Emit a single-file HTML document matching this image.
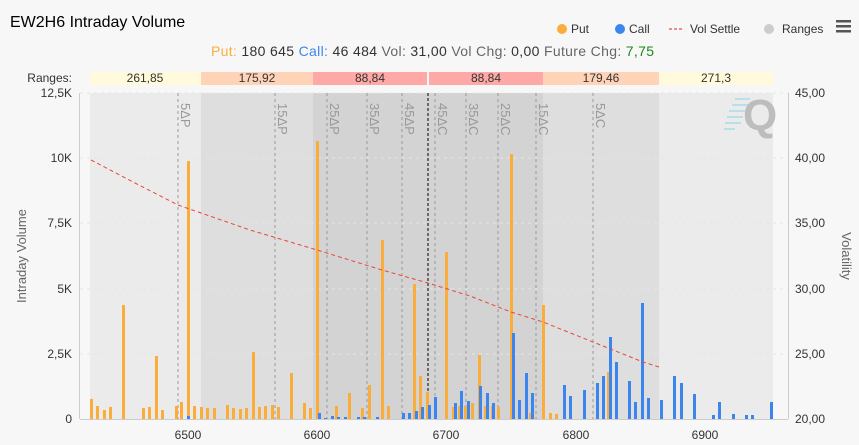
<!DOCTYPE html>
<html><head><meta charset="utf-8"><style>
body{margin:0;background:#f7f7f7;}
svg{display:block;font-family:"Liberation Sans",sans-serif;}
</style></head><body>
<svg width="859" height="445" xmlns="http://www.w3.org/2000/svg">
<rect width="859" height="445" fill="#f7f7f7"/>
<text x="10" y="27" font-size="16" fill="#000">EW2H6 Intraday Volume</text>
<g font-size="12" fill="#333">
<circle cx="562" cy="29" r="5" fill="#fbad3c"/><text x="571" y="33">Put</text>
<circle cx="620" cy="29" r="5" fill="#3d85ee"/><text x="629" y="33">Call</text>
<line x1="669" y1="29" x2="684" y2="29" stroke="#ef8a8a" stroke-width="2" stroke-dasharray="3,2"/><text x="690" y="33" textLength="50">Vol Settle</text>
<circle cx="769" cy="29" r="5" fill="#ccc"/><text x="782" y="33">Ranges</text>
</g>
<g fill="#555"><rect x="836" y="20" width="15" height="2.5"/><rect x="836" y="25" width="15" height="2.5"/><rect x="836" y="30" width="15" height="2.5"/></g>
<text x="211" y="56" font-size="14" fill="#fbad3c" textLength="443" lengthAdjust="spacing">Put: <tspan fill="#333">180 645</tspan> <tspan fill="#3d85ee">Call:</tspan> <tspan fill="#333">46 484</tspan> <tspan fill="#666">Vol:</tspan> <tspan fill="#333">31,00</tspan> <tspan fill="#666">Vol Chg:</tspan> <tspan fill="#333">0,00</tspan> <tspan fill="#666">Future Chg:</tspan> <tspan fill="#1a8a1a">7,75</tspan></text>
<text x="72" y="82" font-size="12" fill="#333" text-anchor="end">Ranges:</text>
<g font-size="12" fill="#333" text-anchor="middle">
<rect x="90" y="72" width="111" height="13" fill="#fffadb"/><text x="145" y="82">261,85</text>
<rect x="201" y="72" width="112" height="13" fill="#ffd3b8"/><text x="257" y="82">175,92</text>
<rect x="313" y="72" width="114" height="13" fill="#ffa8a8"/><text x="370" y="82">88,84</text>
<rect x="429" y="72" width="114" height="13" fill="#ffa8a8"/><text x="486" y="82">88,84</text>
<rect x="543" y="72" width="116" height="13" fill="#ffd3b8"/><text x="601" y="82">179,46</text>
<rect x="659" y="72" width="114" height="13" fill="#fffadb"/><text x="716" y="82">271,3</text>
</g>
<rect x="90" y="93" width="111" height="326" fill="#ebebeb"/>
<rect x="201" y="93" width="112" height="326" fill="#dedede"/>
<rect x="313" y="93" width="230" height="326" fill="#d3d3d3"/>
<rect x="543" y="93" width="116" height="326" fill="#dedede"/>
<rect x="659" y="93" width="114" height="326" fill="#ebebeb"/>
<g stroke="#a8dcea" stroke-width="1.5"><line x1="735" y1="99" x2="750" y2="99"/><line x1="732" y1="105" x2="748" y2="105"/><line x1="729" y1="111" x2="745" y2="111"/><line x1="727" y1="117" x2="743" y2="117"/><line x1="725" y1="123" x2="741" y2="123"/><line x1="724" y1="129" x2="735" y2="129"/></g>
<text x="743" y="130" font-size="44" font-weight="bold" fill="#bdbdbd">Q</text>
<g stroke="#e4e4e4" stroke-dasharray="3,4" stroke-width="1">
<line x1="80" y1="93" x2="788" y2="93"/><line x1="80" y1="158" x2="788" y2="158"/><line x1="80" y1="223" x2="788" y2="223"/><line x1="80" y1="289" x2="788" y2="289"/><line x1="80" y1="354" x2="788" y2="354"/>
</g>
<line x1="79.5" y1="93" x2="79.5" y2="419" stroke="#ccc"/>
<line x1="788.5" y1="93" x2="788.5" y2="419" stroke="#ccc"/>
<line x1="80" y1="419.5" x2="788" y2="419.5" stroke="#ccc"/>
<g font-size="12" fill="#333" text-anchor="end">
<text x="72" y="97">12,5K</text><text x="72" y="162">10K</text><text x="72" y="227">7,5K</text><text x="72" y="293">5K</text><text x="72" y="358">2,5K</text><text x="72" y="423">0</text>
</g>
<g font-size="12" fill="#333">
<text x="795" y="97">45,00</text><text x="795" y="162">40,00</text><text x="795" y="227">35,00</text><text x="795" y="293">30,00</text><text x="795" y="358">25,00</text><text x="795" y="423">20,00</text>
</g>
<g font-size="12" fill="#333" text-anchor="middle">
<text x="188" y="439">6500</text><text x="317" y="439">6600</text><text x="446" y="439">6700</text><text x="576" y="439">6800</text><text x="705" y="439">6900</text>
</g>
<text transform="translate(26,256) rotate(-90)" font-size="13" fill="#666" text-anchor="middle">Intraday Volume</text>
<text transform="translate(842,256) rotate(90)" font-size="13" fill="#666" text-anchor="middle">Volatility</text>
<g stroke="#999" stroke-dasharray="3,3">
<line x1="178" y1="93" x2="178" y2="419"/><line x1="275" y1="93" x2="275" y2="419"/><line x1="327" y1="93" x2="327" y2="419"/><line x1="367" y1="93" x2="367" y2="419"/><line x1="402" y1="93" x2="402" y2="419"/><line x1="435" y1="93" x2="435" y2="419"/><line x1="466" y1="93" x2="466" y2="419"/><line x1="498" y1="93" x2="498" y2="419"/><line x1="536" y1="93" x2="536" y2="419"/><line x1="593" y1="93" x2="593" y2="419"/>
</g>
<line x1="428" y1="93" x2="428" y2="419" stroke="#333" stroke-dasharray="3,2" stroke-width="1.3"/>
<g font-size="13" fill="#999">
<text transform="translate(181,103) rotate(90)">5ΔP</text>
<text transform="translate(278,103) rotate(90)">15ΔP</text>
<text transform="translate(330,103) rotate(90)">25ΔP</text>
<text transform="translate(370,103) rotate(90)">35ΔP</text>
<text transform="translate(405,103) rotate(90)">45ΔP</text>
<text transform="translate(438,103) rotate(90)">45ΔC</text>
<text transform="translate(469,103) rotate(90)">35ΔC</text>
<text transform="translate(501,103) rotate(90)">25ΔC</text>
<text transform="translate(539,103) rotate(90)">15ΔC</text>
<text transform="translate(596,103) rotate(90)">5ΔC</text>
</g>
<g fill="#fbad3c">
<rect x="90" y="399" width="3" height="20"/><rect x="96" y="406" width="3" height="13"/><rect x="103" y="410" width="3" height="9"/><rect x="109" y="407" width="3" height="12"/><rect x="122" y="305" width="3" height="114"/><rect x="142" y="408" width="3" height="11"/><rect x="148" y="407" width="3" height="12"/><rect x="155" y="356" width="3" height="63"/><rect x="161" y="410" width="3" height="9"/><rect x="175" y="406" width="3" height="13"/><rect x="180" y="402" width="3" height="17"/><rect x="187" y="161" width="3" height="258"/><rect x="193" y="406" width="3" height="13"/><rect x="200" y="407" width="3" height="12"/><rect x="206" y="408" width="3" height="11"/><rect x="213" y="408" width="3" height="11"/><rect x="226" y="405" width="3" height="14"/><rect x="232" y="408" width="3" height="11"/><rect x="239" y="409" width="3" height="10"/><rect x="245" y="408" width="3" height="11"/><rect x="252" y="352" width="3" height="67"/><rect x="258" y="407" width="3" height="12"/><rect x="264" y="406" width="3" height="13"/><rect x="271" y="405" width="3" height="14"/><rect x="277" y="407" width="3" height="12"/><rect x="290" y="373" width="3" height="46"/><rect x="303" y="403" width="3" height="16"/><rect x="309" y="408" width="3" height="11"/><rect x="316" y="141" width="3" height="278"/><rect x="335" y="406" width="3" height="13"/><rect x="348" y="393" width="3" height="26"/><rect x="361" y="408" width="3" height="11"/><rect x="368" y="385" width="3" height="34"/><rect x="381" y="240" width="3" height="179"/><rect x="387" y="406" width="3" height="13"/><rect x="413" y="284" width="3" height="135"/><rect x="419" y="376" width="3" height="43"/><rect x="426" y="392" width="3" height="27"/><rect x="445" y="252" width="3" height="167"/><rect x="452" y="407" width="3" height="12"/><rect x="458" y="406" width="3" height="13"/><rect x="464" y="406" width="3" height="13"/><rect x="471" y="403" width="3" height="16"/><rect x="478" y="355" width="3" height="64"/><rect x="484" y="406" width="3" height="13"/><rect x="491" y="406" width="3" height="13"/><rect x="497" y="407" width="3" height="12"/><rect x="510" y="154" width="3" height="265"/><rect x="529" y="413" width="3" height="6"/><rect x="542" y="305" width="3" height="114"/><rect x="549" y="413" width="3" height="6"/><rect x="555" y="414" width="3" height="5"/><rect x="607" y="372" width="3" height="47"/>
</g>
<g fill="#3d85ee">
<rect x="187" y="416" width="3" height="3"/><rect x="318" y="413" width="3" height="6"/><rect x="324" y="418" width="3" height="1"/><rect x="331" y="416" width="3" height="3"/><rect x="337" y="417" width="3" height="2"/><rect x="344" y="417" width="3" height="2"/><rect x="357" y="417" width="3" height="2"/><rect x="363" y="417" width="3" height="2"/><rect x="376" y="417" width="3" height="2"/><rect x="402" y="413" width="3" height="6"/><rect x="408" y="413" width="3" height="6"/><rect x="415" y="411" width="3" height="8"/><rect x="421" y="407" width="3" height="12"/><rect x="428" y="405" width="3" height="14"/><rect x="434" y="397" width="3" height="22"/><rect x="454" y="403" width="3" height="16"/><rect x="460" y="391" width="3" height="28"/><rect x="467" y="401" width="3" height="18"/><rect x="479" y="386" width="3" height="33"/><rect x="486" y="393" width="3" height="26"/><rect x="492" y="403" width="3" height="16"/><rect x="512" y="333" width="3" height="86"/><rect x="518" y="400" width="3" height="19"/><rect x="525" y="373" width="3" height="46"/><rect x="531" y="393" width="3" height="26"/><rect x="563" y="385" width="3" height="34"/><rect x="569" y="396" width="3" height="23"/><rect x="583" y="390" width="3" height="29"/><rect x="596" y="383" width="3" height="36"/><rect x="602" y="376" width="3" height="43"/><rect x="609" y="337" width="3" height="82"/><rect x="615" y="362" width="3" height="57"/><rect x="628" y="381" width="3" height="38"/><rect x="634" y="402" width="3" height="17"/><rect x="641" y="303" width="3" height="116"/><rect x="647" y="398" width="3" height="21"/><rect x="660" y="400" width="3" height="19"/><rect x="673" y="376" width="3" height="43"/><rect x="680" y="383" width="3" height="36"/><rect x="693" y="394" width="3" height="25"/><rect x="712" y="415" width="3" height="4"/><rect x="718" y="402" width="3" height="17"/><rect x="732" y="414" width="3" height="5"/><rect x="745" y="415" width="3" height="4"/><rect x="751" y="415" width="3" height="4"/><rect x="770" y="402" width="3" height="17"/>
</g>
<polyline points="91,160 135,183 178,205 250,230 317,250 382,270 428,283 470,296 511,312 543,322 593,342 643,362 659,367" fill="none" stroke="#e8473b" stroke-width="1" stroke-dasharray="4,3"/>
</svg>
</body></html>
